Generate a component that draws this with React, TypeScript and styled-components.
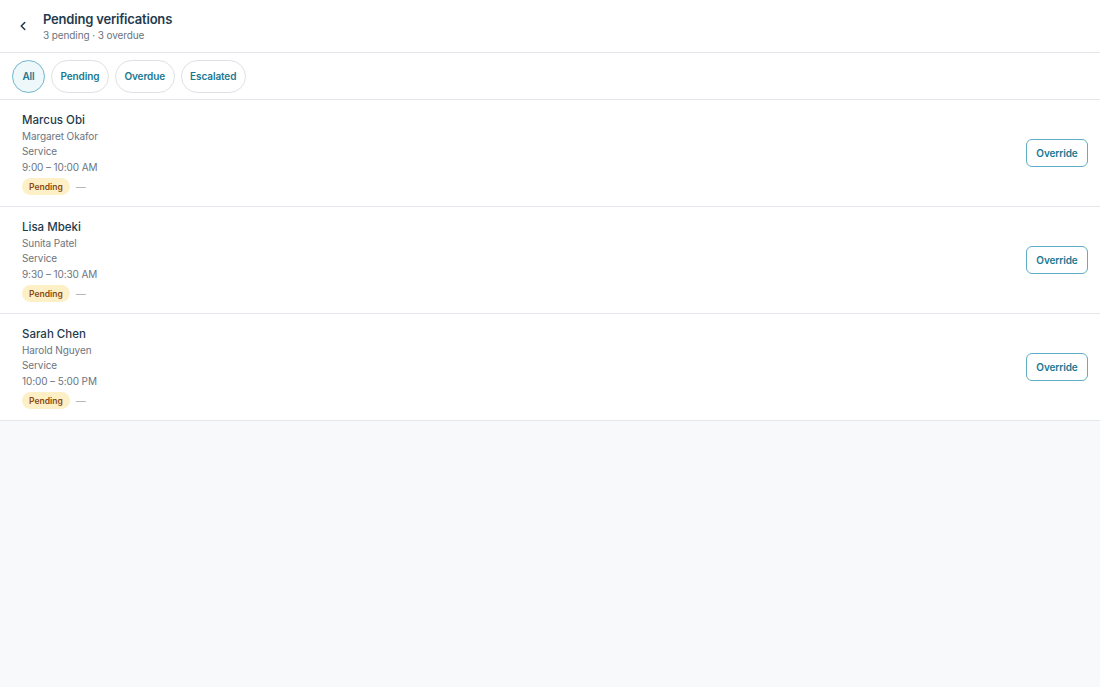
import React from 'react';
import styled, { createGlobalStyle } from 'styled-components';

const GlobalStyle = createGlobalStyle`
  * { box-sizing: border-box; }
  html, body { margin: 0; padding: 0; }
  body {
    font-family: Inter, "Noto Sans", "Liberation Sans", sans-serif;
    background: #f8f9fb;
    -webkit-font-smoothing: antialiased;
  }
`;

const filters = ['All', 'Pending', 'Overdue', 'Escalated'];

const items = [
  { name: 'Marcus Obi', client: 'Margaret Okafor', type: 'Service', time: '9:00 – 10:00 AM' },
  { name: 'Lisa Mbeki', client: 'Sunita Patel', type: 'Service', time: '9:30 – 10:30 AM' },
  { name: 'Sarah Chen', client: 'Harold Nguyen', type: 'Service', time: '10:00 – 5:00 PM' },
];

const App: React.FC = () => {
  return (
    <Page>
      <GlobalStyle />
      <Header>
        <BackButton aria-label="Back">
          <svg width="14" height="14" viewBox="0 0 24 24" fill="none" stroke="currentColor" strokeWidth="2.6" strokeLinecap="round" strokeLinejoin="round">
            <path d="M15 18l-6-6 6-6" />
          </svg>
        </BackButton>
        <HeaderText>
          <Title>Pending verifications</Title>
          <Subtitle>3 pending · 3 overdue</Subtitle>
        </HeaderText>
      </Header>

      <FilterBar>
        {filters.map((f) => (
          <Chip key={f} $active={f === 'All'}>{f}</Chip>
        ))}
      </FilterBar>

      <List>
        {items.map((item) => (
          <Row key={item.name}>
            <Details>
              <Name>{item.name}</Name>
              <Meta>{item.client}</Meta>
              <Meta>{item.type}</Meta>
              <Meta>{item.time}</Meta>
              <StatusLine>
                <StatusPill>Pending</StatusPill>
                <Dash>—</Dash>
              </StatusLine>
            </Details>
            <OverrideButton>Override</OverrideButton>
          </Row>
        ))}
      </List>
    </Page>
  );
};

const Page = styled.div`
  min-height: 100vh;
  background: #f8f9fb;
`;

const Header = styled.header`
  height: 53px;
  background: #ffffff;
  border-bottom: 1px solid #e3e6ea;
  display: flex;
  align-items: center;
  padding: 0 16px;
  gap: 13px;
`;

const BackButton = styled.button`
  background: none;
  border: none;
  padding: 0;
  width: 14px;
  height: 14px;
  display: flex;
  align-items: center;
  justify-content: center;
  color: #1f3b4d;
  cursor: pointer;
`;

const HeaderText = styled.div`
  display: flex;
  flex-direction: column;
  gap: 1px;
  margin-top: 1px;
`;

const Title = styled.h1`
  margin: 0;
  font-size: 13px;
  font-weight: 600;
  letter-spacing: -0.2px;
  color: #1f3b4d;
  line-height: 17px;
`;

const Subtitle = styled.div`
  font-size: 10px;
  letter-spacing: -0.1px;
  color: #6b7580;
  line-height: 13px;
`;

const FilterBar = styled.div`
  height: 47px;
  background: #ffffff;
  border-bottom: 1px solid #e3e6ea;
  display: flex;
  align-items: center;
  gap: 6px;
  padding: 0 12px;
`;

const Chip = styled.button<{ $active?: boolean }>`
  height: 33px;
  padding: 0 ${(p) => (p.$active ? '9px' : '8.5px')};
  min-width: 33px;
  border-radius: 17px;
  border: 1px solid ${(p) => (p.$active ? '#6cb6cc' : '#dde1e5')};
  background: ${(p) => (p.$active ? '#eef7fa' : '#ffffff')};
  color: #1b7890;
  font-family: inherit;
  font-size: 10px;
  letter-spacing: -0.1px;
  font-weight: 600;
  cursor: pointer;
`;

const List = styled.div`
  display: flex;
  flex-direction: column;
`;

const Row = styled.div`
  background: #ffffff;
  border-bottom: 1px solid #e3e6ea;
  height: 107px;
  display: flex;
  align-items: center;
  justify-content: space-between;
  padding: 0 12px 0 22px;
`;

const Details = styled.div`
  display: flex;
  flex-direction: column;
  margin-top: 1px;
`;

const Name = styled.div`
  font-size: 11.5px;
  font-weight: 500;
  color: #1f3b4d;
  line-height: 16px;
  margin-bottom: 1px;
`;

const Meta = styled.div`
  font-size: 10px;
  letter-spacing: -0.1px;
  color: #6b7580;
  line-height: 15.5px;
`;

const StatusLine = styled.div`
  display: flex;
  align-items: center;
  gap: 6px;
  margin-top: 3px;
`;

const StatusPill = styled.span`
  height: 17px;
  padding: 0 7px;
  border-radius: 9px;
  background: #fdf0c6;
  color: #8a4a14;
  font-size: 8.5px;
  font-weight: 600;
  display: inline-flex;
  align-items: center;
`;

const Dash = styled.span`
  color: #a1a8b0;
  font-size: 10px;
`;

const OverrideButton = styled.button`
  width: 62px;
  height: 28px;
  border-radius: 6px;
  border: 1px solid #5fadc4;
  background: #ffffff;
  color: #1b7890;
  font-family: inherit;
  font-size: 10px;
  letter-spacing: -0.1px;
  font-weight: 600;
  cursor: pointer;
  margin-top: -1px;
`;

export default App;
